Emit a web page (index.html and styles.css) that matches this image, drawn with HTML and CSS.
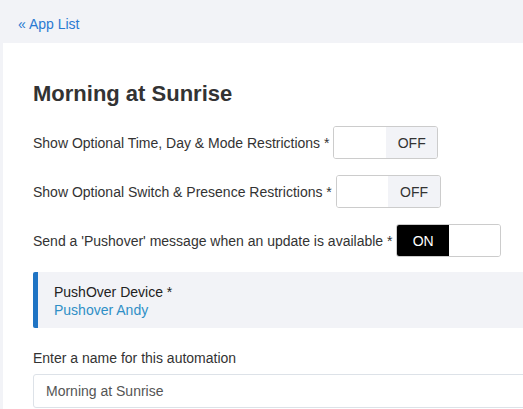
FILE: index.html
```html
<!DOCTYPE html>
<html>
<head>
<meta charset="utf-8">
<link rel="stylesheet" href="styles.css">
</head>
<body>
<div class="page">
  <div class="topbar"><a class="back" href="#">« App List</a></div>
  <div class="card">
    <h1 class="title">Morning at Sunrise</h1>
    <div class="rows">
      <div class="row">
        <span class="label">Show Optional Time, Day &amp; Mode Restrictions *</span>
        <div class="toggle off"><span class="half blank"></span><span class="half state">OFF</span></div>
      </div>
      <div class="row">
        <span class="label">Show Optional Switch &amp; Presence Restrictions *</span>
        <div class="toggle off"><span class="half blank"></span><span class="half state">OFF</span></div>
      </div>
      <div class="row">
        <span class="label">Send a 'Pushover' message when an update is available *</span>
        <div class="toggle on"><span class="half state">ON</span><span class="half blank"></span></div>
      </div>
    </div>
    <div class="device">
      <div class="device-title">PushOver Device *</div>
      <div class="device-value">Pushover Andy</div>
    </div>
    <div class="field-label">Enter a name for this automation</div>
    <div class="input">Morning at Sunrise</div>
  </div>
</div>
</body>
</html>
```
FILE: styles.css
```css
html, body {
  margin: 0;
  padding: 0;
  overflow: hidden;
}
body {
  background: #f2f3f7;
  font-family: "Liberation Sans", Arial, sans-serif;
  font-size: 14px;
  color: #333;
}
.page {
  width: 600px;
}
.topbar {
  height: 43px;
  box-sizing: border-box;
  padding: 16px 18px 0;
  line-height: 16px;
}
.back {
  color: #2a7ad2;
  text-decoration: none;
}
.card {
  margin-left: 3px;
  background: #fff;
  padding: 38px 0 40px 30px;
}
.title {
  margin: 0;
  font-size: 22px;
  line-height: 26px;
  font-weight: bold;
  color: #333;
}
.rows {
  margin-top: 19px;
  display: flex;
  flex-direction: column;
  gap: 16px;
}
.row {
  display: flex;
  align-items: center;
  gap: 4px;
  height: 33px;
}
.label {
  line-height: 18px;
}
.toggle {
  display: flex;
  width: 105px;
  height: 33px;
  box-sizing: border-box;
  border: 1px solid #ccc;
  border-radius: 3px;
  overflow: hidden;
}
.half {
  flex: 1;
  display: flex;
  align-items: center;
  justify-content: center;
  font-size: 14px;
}
.off .state {
  background: #f2f3f7;
  color: #333;
}
.on .state {
  background: #000;
  color: #fff;
}
.blank {
  background: #fff;
}
.device {
  margin-top: 15px;
  background: #f2f3f7;
  border-left: 5px solid #1f74c4;
  border-radius: 2px 0 0 2px;
  padding: 11px 16px 9px;
  line-height: 18px;
}
.device-title {
  color: #222;
}
.device-value {
  color: #2f8fc6;
}
.field-label {
  margin-top: 21px;
  line-height: 18px;
  color: #333;
}
.input {
  margin-top: 7px;
  height: 34px;
  box-sizing: border-box;
  border: 1px solid #dde2e8;
  border-radius: 3px;
  padding: 0 12px;
  display: flex;
  align-items: center;
  color: #555;
  font-size: 14px;
}
```
